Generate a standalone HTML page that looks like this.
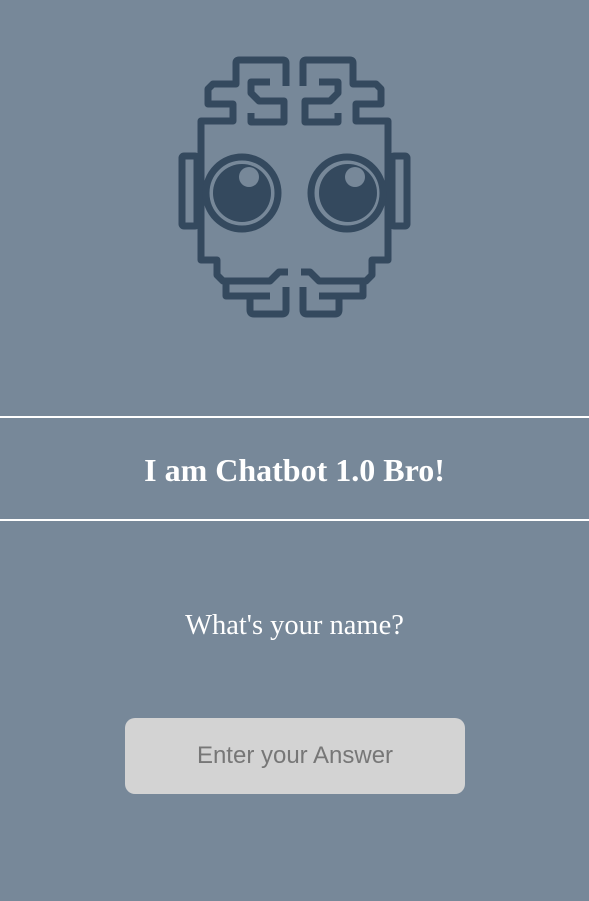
<!DOCTYPE html>
<html><head><meta charset="utf-8"><style>
html,body{margin:0;padding:0;}
body{width:589px;height:901px;background:#778899;position:relative;overflow:hidden;font-family:"Liberation Serif",serif;}
svg{position:absolute;left:0;top:0;}
.line{position:absolute;left:0;width:589px;height:2px;background:#fff;}
.t{position:absolute;left:0;width:589px;text-align:center;color:#fff;white-space:nowrap;}
.box{position:absolute;left:125px;top:718px;width:340px;height:76px;background:#d3d3d3;border-radius:10px;
 font-family:"Liberation Sans",sans-serif;font-size:24px;color:#777;text-align:center;line-height:76px;}
</style></head><body>
<svg width="589" height="330" viewBox="0 0 589 330">
<defs>
<g id="half" fill="none" stroke="#34495e" stroke-width="7" stroke-linejoin="round">
 <path d="M286,86 V63 Q286,60 283,60 H239 Q236,60 236,63 V84 H213 L208,89 V104 H233 V121 H201 V260 H217 V275 L223,281 H270 L279,272 H288"/>
 <path d="M270,82 H251 V93 L259,101 H284 V122 H251 V113"/>
 <rect x="182" y="156" width="15" height="70" rx="2"/>
 <path d="M226,281 V296 H250 V310 Q250,314 254,314 H282 Q286,314 286,310 V287"/>
 <path d="M250,296 H270"/>
 <circle cx="242" cy="193" r="36"/>
</g>
</defs>
<use href="#half"/>
<use href="#half" transform="translate(589,0) scale(-1,1)"/>
<circle cx="242" cy="193" r="29" fill="#34495e"/>
<circle cx="348" cy="193" r="29" fill="#34495e"/>
<circle cx="249" cy="177" r="10" fill="#778899"/>
<circle cx="355" cy="177" r="10" fill="#778899"/>
</svg>
<div class="line" style="top:416px"></div>
<div class="line" style="top:519px"></div>
<div class="t" style="top:450px;font-size:32px;font-weight:bold;line-height:40px;">I am Chatbot 1.0 Bro!</div>
<div class="t" style="top:608px;font-size:28.5px;line-height:36px;">What's your name?</div>
<div class="box">Enter your Answer</div>
</body></html>
